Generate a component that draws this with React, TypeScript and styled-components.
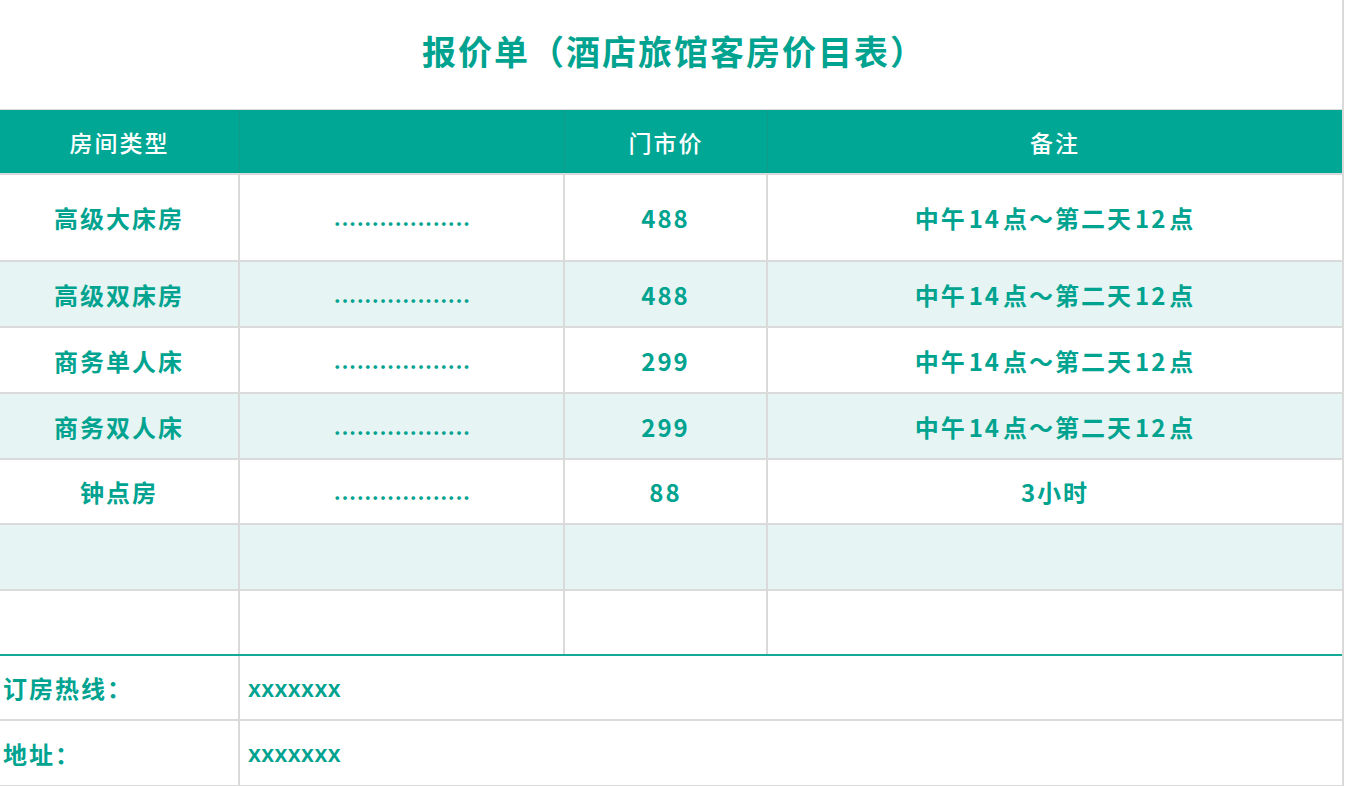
import styled, { createGlobalStyle } from 'styled-components';

const GlobalStyle = createGlobalStyle`
  html, body {
    margin: 0;
    padding: 0;
    background: #fff;
  }
  body {
    font-family: "Noto Sans CJK SC", "Noto Sans", sans-serif;
  }
`;

const teal = '#00a38f';
const line = '#dadada';

const Sheet = styled.div`
  width: 1344px;
  box-sizing: border-box;
  border-right: 2px solid ${line};
  color: ${teal};
`;

const Title = styled.h1`
  margin: 0;
  height: 109px;
  display: flex;
  align-items: center;
  justify-content: center;
  font-size: 34px;
  font-weight: 600;
  letter-spacing: 2px;
  padding: 0 0 8px 6px;
  box-sizing: border-box;
`;

const Row = styled.div<{ $h: number; $tint?: boolean; $head?: boolean; $rule?: string }>`
  display: grid;
  grid-template-columns: 240px 325px 203px 1fr;
  height: ${(p) => p.$h}px;
  box-sizing: border-box;
  border-bottom: ${(p) => p.$rule || `2px solid ${line}`};
  border-top: ${(p) => (p.$head ? `1px solid ${line}` : 'none')};
  background: ${(p) => (p.$head ? '#00a794' : p.$tint ? '#e6f5f3' : '#fff')};
  color: ${(p) => (p.$head ? '#fff' : teal)};
`;

const FootRow = styled(Row)`
  grid-template-columns: 240px 1fr;
`;

const Cell = styled.div<{ $left?: boolean; $last?: boolean }>`
  display: flex;
  align-items: center;
  justify-content: ${(p) => (p.$left ? 'flex-start' : 'center')};
  padding: ${(p) => (p.$left ? '0 0 0 3px' : '0')};
  font-size: 24px;
  font-weight: 600;
  letter-spacing: 2px;
  border-right: ${(p) => (p.$last ? 'none' : `2px solid ${line}`)};
  white-space: nowrap;
`;

const HeadCell = styled(Cell)`
  font-size: 23px;
  font-weight: 500;
  border-right: ${(p) => (p.$last ? 'none' : '1px solid #0f9c8a')};
`;

const Dots = styled.span`
  font-size: 20px;
  letter-spacing: 1.1px;
  padding-left: 2px;
`;

const Num = styled.span`
  padding: 0 2px;
`;

const Value = styled.span`
  font-family: "Noto Sans", sans-serif;
  font-size: 23px;
  font-weight: 600;
  letter-spacing: 0.4px;
  padding-left: 5px;
`;

const note = (
  <>
    中午<Num>14</Num>点～第二天<Num>12</Num>点
  </>
);

const rooms = [
  { name: '高级大床房', price: '488', note, h: 87 },
  { name: '高级双床房', price: '488', note, h: 66 },
  { name: '商务单人床', price: '299', note, h: 66 },
  { name: '商务双人床', price: '299', note, h: 66 },
  { name: '钟点房', price: '88', note: '3小时', h: 65 },
  { name: '', price: '', note: '', h: 66 },
  { name: '', price: '', note: '', h: 65 },
];

export default function App() {
  return (
    <>
      <GlobalStyle />
      <Sheet>
        <Title>报价单（酒店旅馆客房价目表）</Title>
        <Row $h={66} $head>
          <HeadCell>房间类型</HeadCell>
          <HeadCell />
          <HeadCell>门市价</HeadCell>
          <HeadCell $last>备注</HeadCell>
        </Row>
        {rooms.map((r, i) => (
          <Row
            key={i}
            $h={r.h}
            $tint={i % 2 === 1}
            $rule={i === rooms.length - 1 ? '2px solid #13ab98' : undefined}
          >
            <Cell>{r.name}</Cell>
            <Cell>{r.name && <Dots>..................</Dots>}</Cell>
            <Cell>{r.price}</Cell>
            <Cell $last>{r.note}</Cell>
          </Row>
        ))}
        <FootRow $h={65}>
          <Cell $left>订房热线：</Cell>
          <Cell $left $last>
            <Value>xxxxxxx</Value>
          </Cell>
        </FootRow>
        <FootRow $h={66}>
          <Cell $left>地址：</Cell>
          <Cell $left $last>
            <Value>xxxxxxx</Value>
          </Cell>
        </FootRow>
      </Sheet>
    </>
  );
}
